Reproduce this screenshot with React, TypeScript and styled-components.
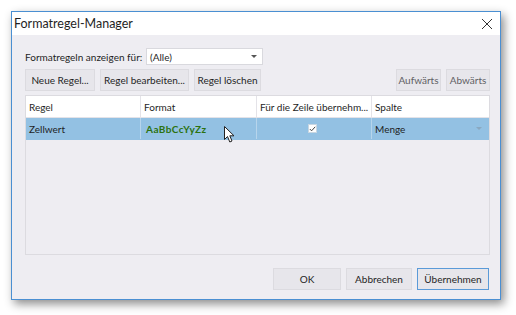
import styled, { createGlobalStyle } from "styled-components";

const GlobalStyle = createGlobalStyle`
  html, body {
    margin: 0;
    padding: 0;
    background: #ffffff;
    font-family: Lato, "Noto Sans", sans-serif;
  }
`;

const Page = styled.div`
  width: 516px;
  height: 315px;
  padding: 11px 0 0 11px;
  box-sizing: border-box;
`;

const Window = styled.div`
  position: relative;
  width: 490px;
  height: 289px;
  box-sizing: border-box;
  border: 1px solid #4a8fd2;
  background: #eeedf2;
  box-shadow: 3px 4px 9px rgba(0, 0, 0, 0.45);
  display: flex;
  flex-direction: column;
`;

const TitleBar = styled.div`
  height: 23px;
  background: #ffffff;
  display: flex;
  align-items: center;
  justify-content: space-between;
  padding: 0 7px 0 2px;
  flex-shrink: 0;
`;

const Title = styled.span`
  font-size: 12.5px;
  color: #1f1f1f;
`;

const Body = styled.div`
  flex: 1;
  display: flex;
  flex-direction: column;
  padding: 13px 10px 9px 13px;
`;

const FilterRow = styled.div`
  display: flex;
  align-items: center;
  gap: 4px;
  height: 17px;
`;

const Label = styled.span`
  font-size: 10px;
  color: #1f1f1f;
  width: 117px;
  white-space: nowrap;
`;

const Select = styled.div`
  width: 117px;
  height: 17px;
  box-sizing: border-box;
  background: #ffffff;
  border: 1px solid #d9d9de;
  display: flex;
  align-items: center;
  justify-content: space-between;
  padding: 0 5px 0 3px;
  font-size: 10px;
  color: #1f1f1f;
`;

const Arrow = styled.span<{ $light?: boolean }>`
  width: 0;
  height: 0;
  border-left: 3px solid transparent;
  border-right: 3px solid transparent;
  border-top: 3px solid ${(p) => (p.$light ? "#8aa8c0" : "#555")};
`;

const Toolbar = styled.div`
  display: flex;
  gap: 5px;
  margin-top: 4px;
  height: 22px;
`;

const Spacer = styled.div`
  flex: 1;
`;

const Button = styled.div<{ $w: number; $disabled?: boolean; $focus?: boolean }>`
  width: ${(p) => p.$w}px;
  height: 22px;
  box-sizing: border-box;
  display: flex;
  align-items: center;
  justify-content: center;
  background: #e7e6eb;
  border: 1px solid ${(p) => (p.$focus ? "#5a9ad8" : "#dcdbe0")};
  font-size: 10px;
  color: ${(p) => (p.$disabled ? "#5f5f64" : "#1f1f1f")};
  white-space: nowrap;
`;

const Grid = styled.div`
  margin-top: 4px;
  height: 160px;
  box-sizing: border-box;
  border: 1px solid #dcdbe0;
  display: flex;
  flex-direction: column;
`;

const GridRow = styled.div<{ $selected?: boolean }>`
  display: grid;
  grid-template-columns: 115px 116px 115px 1fr;
  height: 21px;
  background: ${(p) => (p.$selected ? "#93c1e3" : "#ffffff")};
  border-bottom: 1px solid ${(p) => (p.$selected ? "#93c1e3" : "#e4e3e8")};
`;

const Cell = styled.div<{ $selected?: boolean; $center?: boolean; $last?: boolean }>`
  display: flex;
  align-items: center;
  justify-content: ${(p) => (p.$center ? "center" : "space-between")};
  padding: 0 7px 0 3px;
  font-size: 10px;
  color: #1f1f1f;
  border-right: ${(p) => (p.$last ? "none" : `1px solid ${p.$selected ? "#b7d5ec" : "#e4e3e8"}`)};
  white-space: nowrap;
  overflow: hidden;
`;

const Sample = styled.span`
  font-weight: 700;
  font-size: 10px;
  letter-spacing: 0.45px;
  color: #2c720f;
  padding-left: 2px;
`;

const Check = styled.div`
  width: 9px;
  height: 9px;
  box-sizing: border-box;
  background: #fdfdfd;
  border: 1px solid #c7d6e2;
  display: flex;
  align-items: center;
  justify-content: center;
`;

const Footer = styled.div`
  margin-top: auto;
  display: flex;
  justify-content: flex-end;
  gap: 5px;
  padding-right: 1px;
`;

const Pointer = styled.svg`
  position: absolute;
  left: 212px;
  top: 114px;
`;

export default function App() {
  return (
    <>
      <GlobalStyle />
      <Page>
        <Window>
          <TitleBar>
            <Title>Formatregel-Manager</Title>
            <svg width="12" height="12" viewBox="0 0 12 12">
              <path d="M1 1 L11 11 M11 1 L1 11" stroke="#333" strokeWidth="1" />
            </svg>
          </TitleBar>
          <Body>
            <FilterRow>
              <Label>Formatregeln anzeigen für:</Label>
              <Select>
                <span>(Alle)</span>
                <Arrow />
              </Select>
            </FilterRow>
            <Toolbar>
              <Button $w={70}>Neue Regel...</Button>
              <Button $w={89}>Regel bearbeiten...</Button>
              <Button $w={67}>Regel löschen</Button>
              <Spacer />
              <Button $w={45} $disabled>
                Aufwärts
              </Button>
              <Button $w={44} $disabled>
                Abwärts
              </Button>
            </Toolbar>
            <Grid>
              <GridRow>
                <Cell>Regel</Cell>
                <Cell>Format</Cell>
                <Cell>Für die Zeile übernehm...</Cell>
                <Cell $last>Spalte</Cell>
              </GridRow>
              <GridRow $selected>
                <Cell $selected>Zellwert</Cell>
                <Cell $selected>
                  <Sample>AaBbCcYyZz</Sample>
                </Cell>
                <Cell $selected $center>
                  <Check>
                    <svg width="7" height="6" viewBox="0 0 7 6">
                      <path d="M0.8 3 L2.6 4.8 L6.2 0.8" stroke="#444" strokeWidth="1" fill="none" />
                    </svg>
                  </Check>
                </Cell>
                <Cell $selected $last>
                  <span>Menge</span>
                  <Arrow $light />
                </Cell>
              </GridRow>
            </Grid>
            <Footer>
              <Button $w={68}>OK</Button>
              <Button $w={66}>Abbrechen</Button>
              <Button $w={72} $focus>
                Übernehmen
              </Button>
            </Footer>
          </Body>
          <Pointer width="12" height="18" viewBox="0 0 12 18">
            <path
              d="M0.5 0.5 L0.5 13.5 L3.5 10.5 L5.8 16 L8 15 L5.8 9.8 L10 9.8 Z"
              fill="#ffffff"
              stroke="#222"
              strokeWidth="1"
              strokeLinejoin="round"
            />
          </Pointer>
        </Window>
      </Page>
    </>
  );
}
